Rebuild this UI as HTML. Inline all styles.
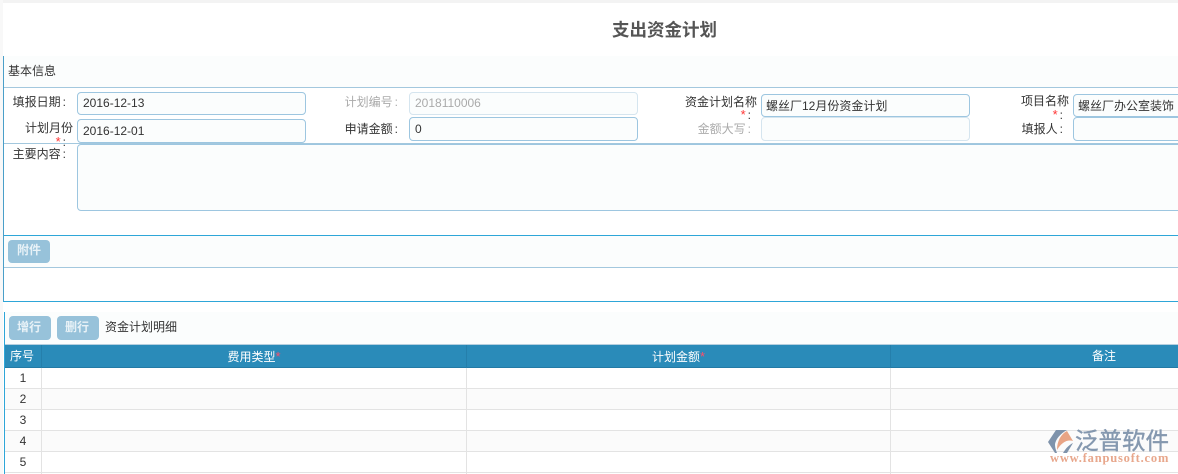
<!DOCTYPE html>
<html lang="zh"><head><meta charset="utf-8"><title>支出资金计划</title>
<style>
html,body{margin:0;padding:0;background:#fff}
#p{position:relative;width:1178px;height:474px;overflow:hidden;background:#fff;font-family:"Liberation Sans","Noto Sans CJK SC",sans-serif;font-size:12px;color:#333}
#p div{position:absolute;box-sizing:border-box}
.l{text-align:right;white-space:nowrap;line-height:15px}
.l i{font-style:normal;padding-left:2px}
.g{color:#aaa}
.i{border:1px solid #9dc6e0;border-radius:4px;height:24px;background:#fbfdfd;padding-left:5px;line-height:22px;white-space:nowrap;overflow:hidden;color:#333}
.d{border-color:#d5e5ef;color:#aaa}
.r{color:#f33;font-size:13px}
.h .r{color:#ff4d6a}
.b{background:#97c2da;color:#e8f2f7;border-radius:4px;font-weight:bold;text-align:center;line-height:21px;height:23px;width:42px}
.h{color:#fff;text-align:center;line-height:23px;top:345px;height:23px;white-space:nowrap}
.n{left:5px;width:36px;height:21px;text-align:center;line-height:21px;color:#333}
.hl{height:1px;left:5px;width:1173px;background:#e3e3e3}
.s{left:5px;width:1173px;height:20px;background:#fbfbfb}
.vl{width:1px;top:368px;height:106px;background:#e3e3e3}
.hv{width:1px;top:345px;height:23px;background:#257fab}
</style></head><body><div id="p">
<div style="left:0;top:0;width:1178px;height:3px;background:#f3f3f3"></div>
<div style="left:0;top:0;width:3px;height:474px;background:#f8f8f8"></div>
<div style="left:612px;top:16px;width:110px;white-space:nowrap;font-size:17.5px;font-weight:bold;color:#555;line-height:28px">支出资金计划</div>

<div style="left:3px;top:56px;width:1px;height:246px;background:#4a9fc9"></div>
<div style="left:4px;top:56px;width:1174px;height:31px;background:#fbfdfd"></div>
<div style="left:8px;top:63px;line-height:17px;color:#333">基本信息</div>
<div style="left:4px;top:87px;width:1174px;height:1px;background:#a3c8de"></div>

<div class="l" style="left:0;top:95px;width:66px">填报日期<i>:</i></div>
<div class="i" style="left:77px;top:92px;width:229px;height:23px;line-height:20px">2016-12-13</div>
<div class="l g" style="left:320px;top:95px;width:78px">计划编号<i>:</i></div>
<div class="i d" style="left:409px;top:92px;width:229px;height:23px;line-height:20px">2018110006</div>
<div class="l" style="left:660px;top:95px;width:97px">资金计划名称</div>
<div class="l" style="left:660px;top:108px;width:91px;line-height:13px"><span class="r">*</span><i>:</i></div>
<div class="i" style="left:761px;top:94px;width:209px;height:23px;padding-left:4px">螺丝厂12月份资金计划</div>
<div class="l" style="left:1000px;top:94px;width:69px">项目名称</div>
<div class="l" style="left:1000px;top:108px;width:63px;line-height:13px"><span class="r">*</span><i>:</i></div>
<div class="i" style="left:1073px;top:94px;width:115px;height:23px;padding-left:4px">螺丝厂办公室装饰</div>

<div class="l" style="left:0;top:121px;width:73px">计划月份</div>
<div class="l" style="left:0;top:135px;width:66px;line-height:13px"><span class="r">*</span><i>:</i></div>
<div class="i" style="left:77px;top:119px;width:229px">2016-12-01</div>
<div class="l" style="left:320px;top:122px;width:78px">申请金额<i>:</i></div>
<div class="i" style="left:409px;top:117px;width:229px;height:24px">0</div>
<div class="l g" style="left:660px;top:122px;width:91px">金额大写<i>:</i></div>
<div class="i d" style="left:761px;top:117px;width:209px;height:24px"></div>
<div class="l" style="left:1000px;top:122px;width:63px">填报人<i>:</i></div>
<div class="i" style="left:1073px;top:117px;width:115px;height:24px"></div>

<div style="left:4px;top:143px;width:1174px;height:1px;background:#a3c8de"></div>
<div class="l" style="left:0;top:147px;width:66px">主要内容<i>:</i></div>
<div class="i" style="left:77px;top:144px;width:1111px;height:67px"></div>

<div style="left:4px;top:235px;width:1174px;height:1px;background:#2ea6d8"></div>
<div style="left:4px;top:236px;width:1174px;height:31px;background:#fbfdfd"></div>
<div class="b" style="left:8px;top:240px">附件</div>
<div style="left:4px;top:267px;width:1174px;height:1px;background:#a3c8de"></div>
<div style="left:3px;top:301px;width:1175px;height:1px;background:#2ea6d8"></div>

<div style="left:4px;top:312px;width:1px;height:162px;background:#2ea6d8"></div>
<div style="left:5px;top:312px;width:1173px;height:32px;background:#fbfdfd"></div>
<div class="b" style="left:9px;top:316px;height:24px;line-height:22px;text-indent:-2px">增行</div>
<div class="b" style="left:57px;top:316px;height:24px;line-height:22px;text-indent:-2px">删行</div>
<div style="left:105px;top:319px;line-height:17px;color:#333">资金计划明细</div>
<div style="left:5px;top:344px;width:1173px;height:1px;background:#b5cfdf"></div>
<div style="left:5px;top:345px;width:1173px;height:23px;background:#2a8bb9;border-bottom:1px solid #237aa5"></div>
<div class="hv" style="left:41px"></div><div class="hv" style="left:466px"></div><div class="hv" style="left:890px"></div>
<div class="h" style="left:4px;width:36px">序号</div>
<div class="h" style="left:42px;width:424px">费用类型<span class="r">*</span></div>
<div class="h" style="left:467px;width:423px">计划金额<span class="r">*</span></div>
<div class="h" style="left:891px;width:426px">备注</div>

<div class="s" style="top:389px"></div><div class="s" style="top:431px"></div>
<div class="hl" style="top:388px"></div><div class="hl" style="top:409px"></div><div class="hl" style="top:430px"></div><div class="hl" style="top:451px"></div><div class="hl" style="top:472px"></div>
<div class="vl" style="left:41px"></div><div class="vl" style="left:466px"></div><div class="vl" style="left:890px"></div>
<div class="n" style="top:368px">1</div><div class="n" style="top:389px">2</div><div class="n" style="top:410px">3</div><div class="n" style="top:431px">4</div><div class="n" style="top:452px">5</div>

<svg style="position:absolute;left:1048px;top:429px" width="30" height="26" viewBox="0 0 30 26">
<path d="M8 1 L19 1 C12 5 8 10 7 15 C7 19 8 21 9 24 L7 24 L0 13 Z" fill="#7f93ab"/>
<path d="M9 21 C9 12 13 5 19 2 L25 12 C19 10 13 14 9 21 Z" fill="#e8a485"/>
<path d="M15 24 L19 24 L25 14 C21 16 18 19 15 24 Z" fill="#7f93ab"/>
</svg>
<div style="left:1075px;top:426px;font-size:23.5px;line-height:30px;color:#8598af;white-space:nowrap;-webkit-text-stroke:.4px #8598af">泛普软件</div>
<div style="left:1050px;top:451px;font-family:'Liberation Serif',serif;font-size:12.5px;line-height:14px;color:#e8a78c;white-space:nowrap;letter-spacing:.8px;font-weight:bold">www.fanpusoft.com</div>
</div></body></html>
